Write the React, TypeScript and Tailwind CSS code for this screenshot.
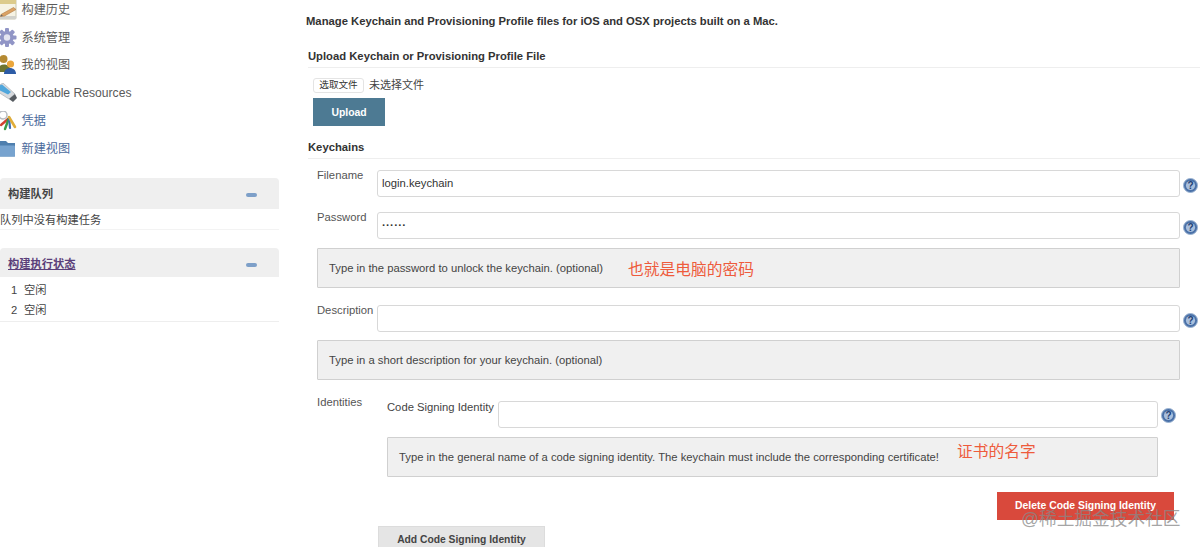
const FONT = "font-['Liberation_Sans','Noto_Sans_CJK_SC',sans-serif]"

const HistoryIcon = () => (
  <svg width="20" height="20" viewBox="0 0 20 20">
    <rect x="-4" y="-3" width="20" height="22" rx="1" fill="#f6f3e4" stroke="#c9c6b0" />
    <rect x="-4" y="-3" width="20" height="7" fill="#dccb8c" />
    <rect x="-4" y="16" width="20" height="3" fill="#d2d2cc" />
    <path d="M1 14.5 L13.5 7.5 L16 9.5 L4.5 16 L0.5 16.5 Z" fill="#dba264" stroke="#b07a42" strokeWidth="0.6" />
    <path d="M0.5 16.5 L1 14.5 L3 15.7 Z" fill="#666" />
  </svg>
)

const GearIcon = () => (
  <svg width="20" height="20" viewBox="0 0 20 20">
    <g fill="#9195c6">
      <circle cx="7" cy="9.5" r="6.6" />
      <rect x="5" y="0" width="4" height="19" rx="1" />
      <rect x="-2.5" y="7.5" width="19" height="4" rx="1" />
      <rect x="5" y="0" width="4" height="19" rx="1" transform="rotate(45 7 9.5)" />
      <rect x="5" y="0" width="4" height="19" rx="1" transform="rotate(-45 7 9.5)" />
    </g>
    <circle cx="7" cy="9.5" r="3.2" fill="#e4e4f0" />
  </svg>
)

const PeopleIcon = () => (
  <svg width="20" height="20" viewBox="0 0 20 20">
    <circle cx="3.5" cy="4" r="4" fill="#b58a32" />
    <path d="M-3 17 C-3 7 11 7 11 17 Z" fill="#6d7530" />
    <circle cx="10.5" cy="9" r="3.6" fill="#eaa63c" />
    <path d="M4 19 C4 11 16 11 16 19 Z" fill="#2d5ca6" />
  </svg>
)

const UsbIcon = () => (
  <svg width="20" height="20" viewBox="0 0 20 20">
    <path d="M-2 3 L3 0 L15 11 L9 16 L-2 9 Z" fill="#d7dade" stroke="#a0a5aa" strokeWidth="0.6" />
    <path d="M-2 3 L2 1.5 L11 9 L8 11.5 L-2 6.5 Z" fill="#4fa6dc" />
    <path d="M9 16 L15 11 L17 15 L13 19 Z" fill="#565b61" />
  </svg>
)

const KeysIcon = () => (
  <svg width="20" height="20" viewBox="0 0 20 20" fill="none" strokeLinecap="round">
    <circle cx="3" cy="4" r="4" stroke="#b9bdc2" strokeWidth="1.5" />
    <path d="M8 8 L1 14" stroke="#d2402f" strokeWidth="2.4" />
    <path d="M9 7 L5 18" stroke="#3c9a48" strokeWidth="2.4" />
    <path d="M9 6 L10 17" stroke="#3f6fb5" strokeWidth="2.2" />
    <path d="M9 6 L15 16" stroke="#e0ad3a" strokeWidth="2.6" />
  </svg>
)

const FolderIcon = () => (
  <svg width="20" height="20" viewBox="0 0 20 20">
    <path d="M-2 2 H6 L8 4 H15 V17.5 H-2 Z" fill="#4f7fae" />
    <rect x="-2" y="6.5" width="17" height="11" rx="1" fill="#77a3cf" />
  </svg>
)

const HelpIcon = () => (
  <svg width="15" height="15" viewBox="0 0 15 15" className="shrink-0">
    <circle cx="7.5" cy="7.5" r="7" fill="#4a71a8" stroke="#9db4d2" strokeWidth="1" />
    <circle cx="7.5" cy="7.5" r="4.6" fill="#a9bfdc" />
    <text x="7.5" y="11" textAnchor="middle" fontSize="10" fontWeight="700" fill="#1f3f73" fontFamily="Liberation Sans">?</text>
  </svg>
)

const MinusIcon = () => (
  <div className="mt-[2px] h-[4px] w-[11px] rounded-sm bg-[#7d9fc8]" />
)

const navItems = [
  { label: '构建历史', icon: <HistoryIcon />, color: 'text-[#5a5a5a]' },
  { label: '系统管理', icon: <GearIcon />, color: 'text-[#5a5a5a]' },
  { label: '我的视图', icon: <PeopleIcon />, color: 'text-[#5a5a5a]' },
  { label: 'Lockable Resources', icon: <UsbIcon />, color: 'text-[#5a5a5a]' },
  { label: '凭据', icon: <KeysIcon />, color: 'text-[#4a6a9c]' },
  { label: '新建视图', icon: <FolderIcon />, color: 'text-[#4a6a9c]' },
]

const HelpBox = ({ children, className = '' }: { children: React.ReactNode; className?: string }) => (
  <div className={`flex h-[40px] items-center rounded-[1px] border border-[#d0d0d0] bg-[#f0f0f0] text-[11.25px] text-[#444] ${className}`}>
    {children}
  </div>
)

const TextBox = ({ value = '', className = '' }: { value?: string; className?: string }) => (
  <div className={`flex h-[27px] items-center rounded-[3px] border border-[#d8d8d8] bg-white px-[4px] text-[11.25px] text-[#333] ${className}`}>
    {value}
  </div>
)

const Field = ({ label, value, valueClass = '' }: { label: string; value?: string; valueClass?: string }) => (
  <div className="flex items-start">
    <div className="-mt-[1px] w-[60px] text-[11.25px] leading-[12px] text-[#555]">{label}</div>
    <TextBox value={value} className={`mr-[3px] w-[803px] ${valueClass}`} />
    <div className="pt-[7.5px]">
      <HelpIcon />
    </div>
  </div>
)

const App = () => {
  return (
    <div className={`relative flex h-[547px] w-[1200px] overflow-hidden bg-white ${FONT}`}>
      <aside className="w-[279px] shrink-0">
        <div className="-mt-[4px]">
          {navItems.map((item) => (
            <div key={item.label} className="flex h-[27.8px] items-center">
              <div className="w-[21.5px] overflow-hidden">{item.icon}</div>
              <span className={`text-[12.15px] ${item.color}`}>{item.label}</span>
            </div>
          ))}
        </div>

        <div className="mt-[15px]">
          <div className="flex h-[31px] items-center justify-between rounded-t-[4px] bg-[#efefef] pl-[8px] pr-[22px] pt-[2px]">
            <span className="text-[11.25px] font-bold text-[#444]">构建队列</span>
            <MinusIcon />
          </div>
          <div className="flex h-[21px] items-center border-b border-[#f3f3f3] pt-[3px] text-[11.25px] text-[#444]">
            队列中没有构建任务
          </div>
        </div>

        <div className="mt-[18px]">
          <div className="flex h-[29px] items-center justify-between rounded-t-[4px] bg-[#efefef] pl-[8px] pr-[22px] pt-[4px]">
            <span className="text-[11.25px] font-bold text-[#5b3f7a] underline">构建执行状态</span>
            <MinusIcon />
          </div>
          <div className="border-b border-[#eeeeee] pt-[3px] text-[11.25px] text-[#444]">
            <div className="flex h-[20.5px] items-center pl-[11px]">
              <span className="w-[13px]">1</span>空闲
            </div>
            <div className="flex h-[20.5px] items-center pl-[11px]">
              <span className="w-[13px]">2</span>空闲
            </div>
          </div>
        </div>
      </aside>

      <main className="flex-1 pt-[14px]">
        <p className="ml-[27px] text-[11.25px] font-bold leading-[14px] text-[#333]">
          Manage Keychain and Provisioning Profile files for iOS and OSX projects built on a Mac.
        </p>

        <section className="ml-[29px] mt-[21px]">
          <h2 className="border-b border-[#eeeeee] pb-[4px] text-[11.25px] font-bold leading-[14px] text-[#333]">
            Upload Keychain or Provisioning Profile File
          </h2>
          <div className="ml-[5px] mt-[10px] flex h-[15px] items-center">
            <button className="flex h-[15px] w-[51px] items-center justify-center rounded-[3px] border border-[#e4e4e4] bg-white text-[9.6px] text-[#333]">
              选取文件
            </button>
            <span className="ml-[5px] text-[11px] text-[#444]">未选择文件</span>
          </div>
          <button className="ml-[5px] mt-[5px] flex h-[28px] w-[72px] items-center justify-center bg-[#4d7a93] pt-[1px] text-[10.4px] font-bold text-white">
            Upload
          </button>
        </section>

        <section className="ml-[29px] mt-[14px]">
          <h2 className="border-b border-[#eeeeee] pb-[4px] text-[11.25px] font-bold leading-[14px] text-[#333]">
            Keychains
          </h2>

          <div className="ml-[9px] mt-[11px] flex flex-col">
            <Field label="Filename" value="login.keychain" />
            <div className="mt-[15px]">
              <Field label="Password" value="······" valueClass="font-bold tracking-[0.3px]" />
            </div>
            <HelpBox className="mt-[9px] w-[863px] pl-[11px] pt-[1px]">
              <span>Type in the password to unlock the keychain. (optional)</span>
              <span className="ml-[25px] mt-[2px] text-[15.75px] text-[#ee5b3c]">也就是电脑的密码</span>
            </HelpBox>
            <div className="mt-[17px]">
              <Field label="Description" />
            </div>
            <HelpBox className="mt-[8px] w-[863px] pl-[11px] pt-[1px]">
              <span>Type in a short description for your keychain. (optional)</span>
            </HelpBox>

            <div className="mt-[15px] flex items-start">
              <div className="w-[70px] pt-[1px] text-[11.25px] leading-[12px] text-[#555]">Identities</div>
              <div className="flex-1">
                <div className="mt-[5px] flex items-start">
                  <div className="w-[111px] pt-[1px] text-[11.25px] leading-[12px] text-[#444]">Code Signing Identity</div>
                  <TextBox className="mt-[1px] w-[660px]" />
                  <div className="ml-[3px] pt-[8px]">
                    <HelpIcon />
                  </div>
                </div>
                <HelpBox className="mt-[9px] w-[771px] pl-[11px]">
                  <span>Type in the general name of a code signing identity. The keychain must include the corresponding certificate!</span>
                  <span className="-mt-[10px] ml-[18px] text-[15.75px] text-[#ee5b3c]">证书的名字</span>
                </HelpBox>
                <div className="mt-[15px] flex w-[787px] justify-end">
                  <button className="flex h-[28px] w-[177px] items-center justify-center bg-[#d9493c] text-[10.4px] font-bold text-white">
                    Delete Code Signing Identity
                  </button>
                </div>
              </div>
            </div>
            <button className="ml-[61px] mt-[6px] flex h-[28px] w-[167px] shrink-0 items-center justify-center border border-[#dcdcdc] bg-[#e5e5e5] text-[10.3px] font-bold text-[#444]">
              Add Code Signing Identity
            </button>
          </div>
        </section>
      </main>

      <div className="absolute left-[1021px] top-[509px] text-[17.7px] leading-[20px] text-[#888]/75">@稀土掘金技术社区</div>
    </div>
  )
}

export default App
